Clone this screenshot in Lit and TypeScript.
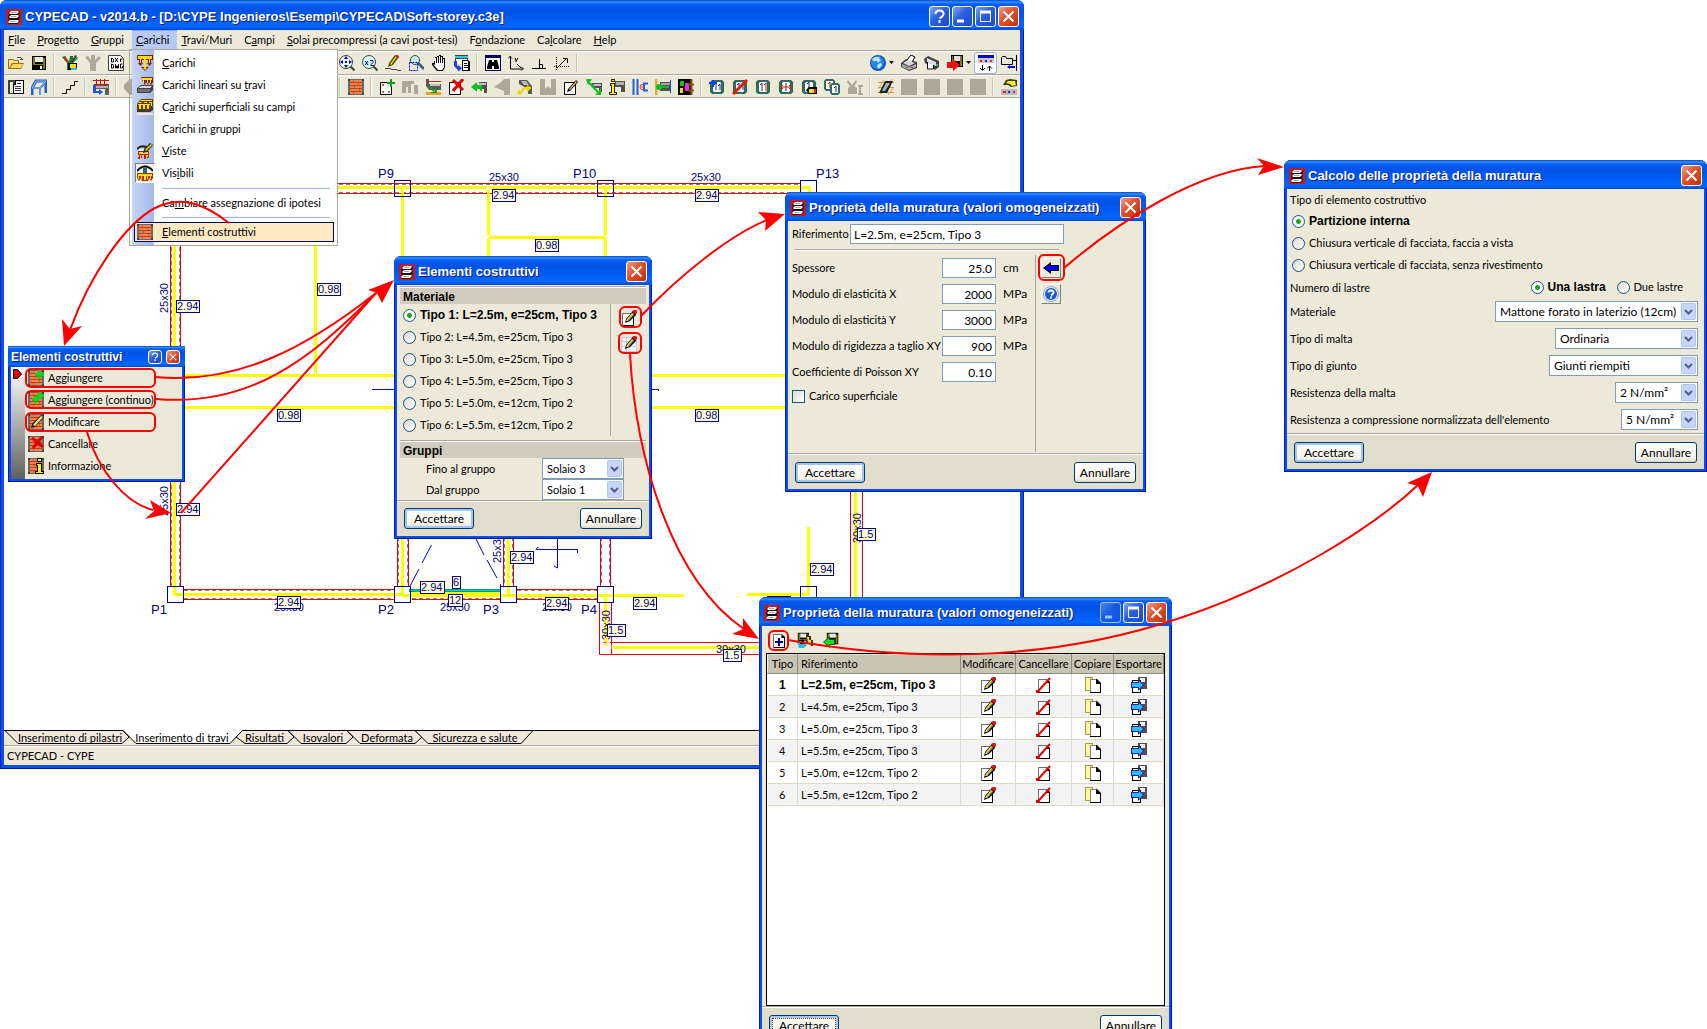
import { LitElement, html, svg, css, nothing } from "lit";
import type { SVGTemplateResult } from "lit";

type Shape = SVGTemplateResult;

const p = (d: string, fill = "#000") => svg`<path d=${d} fill=${fill}></path>`;
const l = (d: string, stroke = "#000", w = 1) =>
  svg`<path d=${d} fill="none" stroke=${stroke} stroke-width=${w}></path>`;

const brick = svg`${p("M0 0h16v16H0z", "#686868")}${p("M2 1h12v14H2z", "#f08050")}
  ${l("M2 3.500h12M2 6.500h12M2 9.500h12M2 12.500h12", "#b04818")}
  ${l("M5.500 1v2M10.500 4v2M6.500 7v2M11.500 10v2M5.500 13v2", "#c86038")}
  ${p("M0 0h2v2H0zM14 0h2v2h-2zM0 14h2v2H0zM14 14h2v2h-2z", "#404040")}`;
const pencil = svg`${p("M4 13l1-4 6-7 4-1v4l-6 6z")}${p("M5 11l1-2 5-6 2 1-6 7z", "#f0e040")}${p("M6 11l6-7 1 1-6 6z", "#909080")}${p("M11 1l2-1h2l1 1v2l-2 2-1-2-2-1z", "#e01010")}`;
const greenPlus = p("M10 0h3v3h3v3h-3v3h-3V6H7V3h3z", "#10d020");
const redX = l("M5 1l10 10M15 1L5 11", "#e00000", 3);
const floppy = svg`${p("M1 1h14v14H1z")}${p("M2 2h2v7H2zM12 3h2v11h-2zM2 9h12v1H2z", "#808000")}${p("M4 2h8v5H4z", "#e8e8e8")}${p("M9 11h2v3H9z", "#fff")}`;
const arrowsDown = svg`${p("M0 0h16v5h-2v3h1l-2.500 3-2.500-3h1V5H9v7h3l-4 4-4-4h3V5H5v3h1l-2.500 3L1 8h1V5H0z", "#802000")}${p("M1 1h14v3h-2v4h-1V4H9v9h1l-2 2-2-2h1V4H4v4H3V4H1z", "#ffe000")}`;
const page = svg`${p("M2 2h9l3 3v11H2z", "#707070")}${p("M11 3l3 2v11H3v-1h10V6h-2z")}${p("M3 3h7v3h3v9H3z", "#fff")}`;
const gray = "#aca899";
const ring = svg`${p("M3 1h10l2 2v10l-2 2H3l-2-2V3z", "#306868")}${p("M5 3h6l1 1v8l-1 1H5l-1-1V4z", "#fffff0")}${p("M0 3h1v10H0zM15 3h1v10h-1z", "#f0e890")}`;
const digits = l("M5 6l2-2v7M9 7l2-2v6", "#2020a0");

const icons: Record<string, Shape> = {
  app: svg`${p("M0 0h16v16H0z", "#c81820")}${p("M4 2h8l2 1-1 3 1 1-1 3 1 2-3 3H3l-1-2 1-3-1-1 1-3-1-1z", "#181010")}
    ${p("M5 2h7l1 1-2 2H4L3 4zM5 6h7l1 1-2 2H4L3 8zM4 11h8l1 1-2 2H3l-1-1z", "#fff")}${p("M5 3h6l-1 1H5zM5 7h6l-1 1H5zM4 12h6l-1 1H4z", "#a8a8a8")}`,
  open: svg`${p("M0 14V4h5l1 1h5v3h5l-3 6z", "#a07010")}${p("M1 5h4l1 1h4v2H4l-3 5z", "#f8e880")}${p("M5 9h10l-2 4H2z", "#ffd860")}${l("M9 2.500h4l1 2M12 4.500h3", "#505050")}`,
  save: floppy,
  tools: svg`${p("M0 2l3-1 4 6 1-6h3v5l4-4 1 1-5 5v7H5V8z", "#108020")}${p("M3 1l4 6-1 1-4-5z", "#e02020")}${p("M13 0l2 1-4 6h-2z", "#404040")}${p("M6 8h9v7H6z")}${p("M8 9h6v4H8z", "#ffe020")}${p("M9 13h6v2H9z", "#20c0e0")}`,
  toolsOff: p("M0 2l3-1 3 4V0h4v5l4-4 2 2-5 5v8H5V8z", gray),
  dxf: svg`${p("M1 1h11v4h3v10H1z", "#fff")}${l("M.5 .5h12l3 3v12H.5z", "#404040")}${l("M3.500 3v4h2V4zM7 3l3 4M10 3L7 7M12.500 7V4h2M3.500 9v4h2v-3zM7.500 9v4h1v-2h1v2h1V9M14.500 9h-2v4h2v-2")}`,
  zoomAll: svg`${l("M10.500 10.500l5 5", "#404040", 2)}<circle cx="7" cy="7" r="6.500" fill="#f4ffff" stroke="#404040"></circle>${p("M7 1l2 3H5zM7 13l2-3H5zM1 7l3-2v4zM13 7l-3-2v4zM6 6h2v2H6z", "#0000e0")}`,
  zoom2: svg`${l("M10.500 10.500l5 5", "#404040", 2)}<circle cx="7" cy="7" r="6.500" fill="#d8ffff" stroke="#404040"></circle>${l("M3 6l3 4M6 6l-3 4M8 5.500h3v2l-2 2v1h3", "#0000a0")}`,
  redraw: svg`${p("M3 12l1-4 6-8 4 2-6 8z", "#505000")}${p("M5 9l6-8 1 1-6 8z", "#f0e000")}${p("M11 0h2l1 2-1 1-3-2z", "#e02020")}${l("M0 13.500h5l2 1h4l2 1h3", "#404040")}`,
  zoomWin: svg`${l("M10 8l6 6", "#406080", 3)}<circle cx="7" cy="5" r="4.500" fill="#c0f8ff" stroke="#404040"></circle><path d="M1.500 7.500h8v8h-8z" fill="none" stroke="#0000ff" stroke-dasharray="2 1"></path>`,
  hand: svg`${p("M3 6h1V2h2V1h2V0h2v1h2v2h2v9l-2 4H6l-5-6V8h2z")}${p("M2 9l2 1V3h1v5h1V2h1v6h1V1h1v7h1V2h1v6h1V4h1v8l-2 3H7z", "#fff")}`,
  regen: svg`${p("M1 0h13v9H1z", "#404040")}${p("M1 1h13v2H1z", "#20d0f0")}${p("M2 4h11v5H2z", "#fff")}${p("M8 5h6l2 2v9H8z")}${p("M9 6h5v9H9z", "#fff")}${l("M10 8.500h3M10 10.500h4M10 12.500h4")}${p("M2 6H0v5l4 4v2l4-4-4-3v2L3 10V6z", "#2040e0")}`,
  find: svg`${p("M0 0h16v16H0z", "#000060")}${p("M1 3h14v12H1z", "#fff")}${p("M4 5h3v2h2V5h3l2 7v2H9v-3H7v3H2v-2z")}`,
  axes: l("M2.500 1v13h13M0 3.500l2-2 2 2M13 11.500l2 2-2 2M7 3l1 2v2M10 3L8 6M9 9l4 4"),
  ortho: l("M1 13.500h14M8.500 4v9M8.500 9.500h3v4"),
  snap: svg`${l("M3 13L13 3M9 3.500h4.500V8")}<path d="M2.500 2v14M0 11.500h16" stroke="#000" stroke-dasharray="1 1"></path>`,
  globe: svg`<circle cx="8" cy="8" r="8" fill="#1058b8"></circle><circle cx="7.500" cy="7.500" r="6.500" fill="#2888e8"></circle>${p("M2 4l3-2 5 0-1 2 2 1-3 3-1-2-4 0zM8 9l3-1 1 2-3 4-2-2z", "#b8e4ff")}`,
  print: svg`${p("M0 8l5-4 11 3v6l-8 3-8-4z", "#404040")}${p("M2 8l5-3 7 3-6 3z", "#d8d8d8")}${p("M1 9l7 3 7-3v3l-7 3-7-3z", "#a8a8a8")}${p("M6 5l4-5 4 2-3 5z", "#fff")}${l("M6 5l4-5 4 2-3 5")}${p("M10 12h2v1h-2z", "#e02020")}${p("M5 12h2v1H5z", "#20a020")}`,
  plot: svg`${p("M0 4l4-3 11 5v6l-4 3L1 8z", "#404040")}${p("M3 3l9 4v4L3 7z", "#e0e0e0")}${p("M3 7l7 3v5H5z", "#fff")}${l("M3.500 7v7h6v-4")}${p("M12 9h2v2h-2z", "#20c060")}`,
  exportRed: svg`<g transform="translate(4)">${p("M0 0h12v12H0z")}${p("M1 1h1v7H1zM9 1h2v10H9z", "#808000")}${p("M3 1h6v5H3z", "#e0e0e0")}</g>${p("M0 7h6V4l7 6-7 6v-3H0z", "#f01010")}`,
  bars: svg`${p("M0 0h16v3H0z", "#0000d0")}${p("M0 3h16v5H0z", "#c8c8c8")}${p("M2 5h2v2H2z", "#e02020")}${p("M7 5h2v2H7z", "#2020e0")}${p("M12 5h2v2h-2z", "#e02080")}${l("M4.500 10v5M2 13l2.500 2.500L7 13M11.500 16v-5M9 13.500l2.500-2.500L14 13.500")}`,
  folder: svg`${l("M.5 9.500v-7l1-1h3l1 2h6v6zM12 5.500h3M15.500 0v16")}${p("M6 12l3-2v1h5v2H9v1z", "#0000f0")}`,
  sheet: svg`${p("M0 1h7v14H0z", "#404040")}${p("M2 3h3v11H2z", "#ece9d8")}${p("M7 1h9v14H5V5h2z")}${p("M8 2h7v12H6V6h2z", "#fff")}${l("M9 4.500h4M7 7.500h6M7 9.500h6M7 11.500h6", "#404040")}`,
  frame: svg`${l("M1 16V9l4-7h10v12", "#2060c0", 3)}${l("M1 9h8l5-5M9 9v7", "#3070d0", 2)}${l("M1 9L5 2h10M1 9h8v7M9 9l6-7", "#90c0f8")}`,
  stairs: l("M0 14.500h4.500v-4h4v-4h4v-4H16", "#000"),
  loads: svg`${p("M2 5h14v11h-4v-6H2z", "#606060")}${p("M3 7h12v2H3z", "#b0b0b0")}${l("M0 1.500h16M3.500 0v5M7.500 0v5M11.500 0v5M1 5.500h14", "#e00000")}${p("M0 6h3v6h3v-2l4 3-4 3v-2H0z", "#2050e0")}`,
  off1: p("M6 0h10v16H6L0 10V6z", gray),
  brick,
  pillarNew: svg`${p("M2 5h10v10H2z", "#fff")}${l("M1.500 3.500h11v12h-11z")}${p("M3 5h2v2H3zM9 12h2v2H9zM3 12h2v2H3z", "#d06040")}${p("M11 0h2v3h3v2h-3v3h-2V5H8V3h3z", "#10a020")}`,
  off2: p("M0 2h12v3H9v9H6V8H4v6H0zM12 6h4v9h-4z", gray),
  beam: svg`${p("M1 0h3v5h12v6H4L1 7z", "#585858")}${l("M4 2.500h12", "#e02020")}${p("M5 5h10v2H5z", "#c0c0c0")}${p("M1 13h15v3H1z", "#f0a020")}${p("M4 7l6 5V9h2v5H6v-1h3L3 8z", "#10a020")}`,
  delete: svg`${p("M2 4h10v11H2z", "#fff")}${l("M1.500 3.500h11v12h-11z")}${l("M5 1l10 10M15 0L5 12", "#e00000", 3)}`,
  beamLeft: svg`${p("M8 3h8v11h-3v-4H8z", "#505050")}${p("M8 4h7v2H8z", "#c0c0c0")}${p("M0 8l6-5v3h5v6H9v-2H6v3z", "#10c020")}`,
  off3: p("M16 0v16h-6v-4L0 8l6-4 4-4z", gray),
  beamYellow: svg`${p("M2 1h8l5 6v8h-4v-5L2 5z", "#585858")}${p("M4 2h5l3 4H7z", "#c0c0c0")}${l("M1 14h3l3-5h6M10 7l3 2-3 3M3 11l-2 3 3 1", "#e8d800", 2)}`,
  off4: p("M0 0h5v10l3-3 3 3V0h5v16H0z", gray),
  editBox: svg`${p("M2 4h10v11H2z", "#fff")}${l("M1.500 3.500h11v12h-11z")}${p("M4 13l1-3 8-9 2 2-8 9z")}${p("M6 10l7-8 1 1-7 8z", "#f0b060")}`,
  diag: svg`${p("M5 4h11v9h-3v-4H8z", "#505050")}${p("M7 5h8v2H8z", "#c0c0c0")}${l("M2 3l11 11", "#10c020", 2)}${p("M0 0h6L4 3 2 6zM15 16h-6l3-3 3-4z", "#10c020")}`,
  info: svg`${p("M6 2h10v11h-4V8H6z", "#505050")}${p("M7 3h8v3H7z", "#b0b0b0")}${p("M1 4h5v9h2v3H0v-3h2V7H1zM2 0h4v3H2z", "#303000")}${p("M2 5h3v9h2v1H1v-1h2V6H2zM3 1h2v1H3z", "#f8e820")}`,
  joint: svg`${l("M1.500 0v16M5.500 0v16", "#2060e0", 2)}${l("M16 4.500h-4v7h4", "#2060e0", 2)}${l("M12 5.500H9l-1 2.500 1 2.500h3M9 8h3", "#f04020")}`,
  anchor: svg`${l("M1 0v16", "#f0a040", 3)}${p("M5 3h11v9H5z", "#505050")}${p("M6 4h9v2H6z", "#a8a8a8")}${l("M2 8h12", "#10c020", 2)}<circle cx="4" cy="8" r="3" fill="#10c020"></circle>${l("M15.500 1v13", "#2040e0")}`,
  tetris: svg`${p("M0 0h13v16H0z")}${p("M2 2h4v5H2z", "#10c020")}${p("M7 4h4v8H7z", "#f020f0")}${p("M2 9h3v5H2z", "#f8d040")}${l("M13.500 0v16M10 5.500h6M10 11.500h6", "#905010", 2)}`,
  r1: svg`${ring}${digits}${p("M0 3h3V1h2v2h3v2H5v3H3V5H0z", "#0040ff")}`,
  r2: svg`${ring}${digits}${l("M1 15L15 1", "#f01010", 3)}`,
  r3: svg`${ring}${l("M5 6l2-2v8", "#2020a0")}${l("M9 6l2-2v8", "#e01010")}`,
  r4: svg`${ring}${l("M8 4v8", "#2020a0")}${l("M3 8h10M5 6L3 8l2 2M11 6l2 2-2 2", "#e01010")}`,
  r5: svg`${ring}${l("M6 5l2-2v7", "#2020a0")}${p("M5 11l3-3h8v7H8z")}${p("M8 10h5v4H8z", "#f0e020")}${p("M13 10h2v4h-2z", "#e02020")}`,
  r6: svg`${p("M2 0h7l2 2v8l-2 2H2l-2-2V2z", "#306868")}${p("M2 2h7v8H2z", "#fffff0")}${l("M4 5l2-2v6", "#e01010")}${p("M8 4h6l2 2v8l-2 2H8l-2-2V6z", "#306868")}${p("M8 6h6v8H8z", "#fffff0")}${l("M10 9l2-2v6", "#2020a0")}`,
  off5: svg`${p("M1 1l4 5 4-5 1 2-3 4 3 2v6H1V9l2-2-3-4z", gray)}${p("M11 6h5v2h-2v6h2v2h-5v-2h1V8h-1z", gray)}`,
  hatch: svg`${l("M0 3.500h16M0 8.500h16M0 13.500h16", "#c89030")}${l("M2 16L14 0M0 10L6 1M10 16l6-8", "#d8b060")}${p("M7 2h8L9 14H1z", "#202020")}${p("M8 4h4l-5 8H4z", "#a0b8b8")}`,
  off6: p("M0 0h16v16H0z", gray),
  custom: svg`${p("M2 6l3-5 4-1 7 1v6l-6 1-3-2z", "#404000")}${p("M5 4l2-2 7 0 1 4-4 1-2-2z", "#f8e840")}${p("M0 10h16v6H0z", "#b8b8b8")}${p("M2 12h3v2H2z", "#e02020")}${p("M7 12h2v2H7z", "#2020e0")}${p("M12 12h2v2h-2z", "#e02080")}`,
  mCarichi: arrowsDown,
  mTravi: svg`${p("M0 11l4-3h12v5l-3 3H0z", "#404040")}${p("M1 11l3-2h11l-2 2z", "#d8d8d8")}${p("M1 12h12v3H1z", "#707070")}${p("M4 0h12v5l-2 3-2-3-1 3-2-3-1 3-2-3z", "#802000")}${p("M5 1h10v2h-1v3h-1V3h-2v3h-1V3H7v3H6V3H5z", "#ffe020")}`,
  mCampi: svg`${p("M0 11l3-3h13v3l-3 2H0z", "#383838")}${p("M0 14h16v2H0z", "#ffe0d0")}${p("M0 5l4-5h12v7l-3 4H0z", "#604000")}${p("M4 1h11v1H3zM1 5h12v1H1zM2 3h3l-1 1H2zM7 3h3v1H7zM12 3h3v1h-3zM2 6h2v4H2zM6 6h2v4H6zM10 6h2v4h-2zM14 4h1v3h-1z", "#ffe020")}`,
  mViste: svg`${l("M0 6q5-5 11-1", "#202020", 2)}${p("M2 6h7v3H2z", "#fff")}${p("M1 8h11v7h-2v-3H9v4H7v-4H5v3H4v-3H3v4H1z", "#c02000")}${p("M2 9h9v2H2zM1 12h1v2H1zM5 12h1v2H5zM10 12h1v2h-1z", "#ffe020")}${p("M6 10l1-4 6-6 3 2-6 7z", "#303000")}${p("M8 7l6-6 1 1-6 6z", "#ffe840")}`,
  mVisibili: svg`${l("M0 6Q8-3 16 6", "#000", 2)}${p("M2 6q6-5 12 0l-3 2H5z", "#fff")}${p("M6 3h4v5H6z", "#107080")}${p("M0 8h16v5l-2 3-2-3-1 3H5l-1-3-2 3-2-3z", "#b03000")}${p("M1 9h14v2h-1v3h-1v-3h-2v3h-1v-3H9v4H7v-4H5v3H4v-3H2v3H1z", "#ffe020")}`,
  bAdd: svg`${brick}${greenPlus}`,
  bAddMore: svg`${brick}${p("M11 0h3v2h2v3h-2v2h-3v2H9v2H6V9H4V6h2V4h3V2h2z", "#10d020")}`,
  bEdit: svg`${brick}${p("M3 14l1-4 9-9 3 2-9 10z", "#202000")}${p("M5 11l8-9 2 1-8 9z", "#f8f080")}`,
  bDel: svg`${brick}${l("M4 2l11 9M14 1L5 12", "#e00000", 3)}`,
  bInfo: svg`${brick}${p("M8 5h6v8h2v3H7v-3h2V8H8zM9 0h5v4H9z")}${p("M9 6h4v8h2v1H8v-1h2V7H9zM10 1h3v2h-3z", "#f8f020")}`,
  edit: svg`${p("M1 3h12v13H1z", "#707070")}${p("M2 15h10V4h1v12H2z")}${p("M2 4h10v11H2z", "#fff")}${pencil}`,
  editTable: svg`${p("M0 1h16v15H0z", "#c8c8d8")}${p("M1 2h4v3H1zM6 2h9v3H6zM1 6h4v4H1zM6 6h9v4H6zM1 11h4v4H1zM6 11h9v4H6z", "#f4f4fa")}${pencil}`,
  cancel: svg`${page}${l("M1 15.500L14 1", "#e80000", 2)}${p("M0 13h3l1 2-1 1H0z", "#e80000")}`,
  copy: svg`${p("M0 0h8v14H0z", "#a0a040")}${p("M1 1h6v12H1z", "#fff8a0")}${p("M5 2h7l4 4v10H5z")}${p("M5 2h6v1H6v12H5z", "#808080")}${p("M6 3h5v4h4v8H6z", "#fff")}`,
  export: svg`${p("M7 0h9v12H7z", "#505050")}${p("M9 1h5v4H9z", "#f0f0f0")}${p("M1 3h9v13H1z")}${p("M2 4h7v11H2z", "#fff")}${p("M0 5h7V2l6 6-6 6v-3H0z", "#2020a0")}${p("M1 6h7V4l4 4-4 4v-2H1z", "#30b8ff")}`,
  addPage: svg`${page}${l("M8 6v8M4 10h8", "#0000a0", 2)}`,
  saveLib: svg`<g transform="scale(.8)">${floppy}</g>${p("M9 2h3v2h2v4h2v6h-2l-1-3h-3z", "#403000")}${p("M10 5h2v3h2v3h-3z", "#f8e040")}${p("M0 9h3v3h4v-2l3 3-3 3H2z", "#20c0e0")}`,
  loadLib: svg`<g transform="translate(3) scale(.82)">${floppy}</g>${p("M0 10l7-6v3h5v6H7v3z", "#105010")}${p("M1 10l5-4v2h5v4H6v2z", "#10e020")}`,
  blueLeft: svg`${p("M0 8l8-6v3h8v6H8v3z")}${p("M1.500 8L7 4v2h8v4H7v2z", "#0000f0")}`,
  help: svg`<circle cx="8" cy="8" r="7.500" fill="#e8f0ff" stroke="#90a8d0"></circle><circle cx="8" cy="8" r="6" fill="#1858d8"></circle>${l("M5.500 6.500q0-2 2.500-2t2.500 2q0 1-2.500 3M8 10.500v2", "#fff", 2)}`,
};

const icon = (name: string) =>
  html`<svg class="ico" width="16" height="16" viewBox="0 0 16 16" aria-hidden="true">${icons[name]}</svg>`;

const base = css`
  * { box-sizing: border-box; }
  button, input, select { font: inherit; color: inherit; margin: 0; }
  button { padding: 0; border: 0; background: none; }
  .ico { display: block; flex: none; }
`;

const capGlyphs: Record<string, Shape> = {
  help: l("M6.500 8q0-3.500 4-3.500t4 3.500q0 2-4 4.500M10.500 14v3", "#fff", 2),
  min: l("M5 15h7", "#fff", 3),
  max: svg`${l("M5.500 5.500h10v10h-10z", "#fff")}${l("M5 6h11", "#fff", 3)}`,
  close: l("M5.500 5.500l10 10M15.500 5.500l-10 10", "#fff", 2),
};
const capLabels: Record<string, string> = { help: "?", min: "Riduci", max: "Ingrandisci", close: "Chiudi" };

class XpWindow extends LitElement {
  static properties = { heading: {}, controls: { type: Array }, kind: { reflect: true } };
  declare heading: string;
  declare controls: string[];
  declare kind: string;
  constructor() {
    super();
    this.heading = "";
    this.controls = ["close"];
    this.kind = "dialog";
  }
  static styles = [base, css`
    :host {
      display: flex; flex-direction: column; padding: 0 3px 3px;
      border-radius: 7px 7px 0 0; color: #000;
      background: #0a50e8; box-shadow: inset 1px 0 #0020c0, inset -1px -1px #0018a8;
    }
    :host([kind="main"]) { padding: 0 4px 4px; }
    :host([kind="main"]) .bar { margin: 0 -4px; height: 30px; padding: 3px 5px 0 6px; }
    :host([kind="palette"]) { border-radius: 0; }
    :host([kind="palette"]) .bar { height: 21px; padding: 1px 5px 0 3px; border-radius: 0; }
    :host([kind="palette"]) .title { font-size: 12px; }
    :host([kind="palette"]) .cap { width: 14px; height: 14px; }
    :host([kind="palette"]) .caps { gap: 4px; }
    .bar {
      display: flex; align-items: center; gap: 3px; margin: 0 -3px; height: 29px; padding: 2px 5px 0;
      border-radius: 7px 7px 0 0;
      background: linear-gradient(#0848c8, #3090ff 7%, #0a5cf0 14%, #0053e4 35%, #005cf4 65%, #0068ff 88%, #0048d0);
    }
    .title {
      flex: 1; margin: 0; font: bold 13px/16px "Liberation Sans", Arial, sans-serif; color: #fff;
      text-shadow: 1px 1px #0a1883; white-space: nowrap;
    }
    .caps { display: flex; gap: 2px; }
    .cap {
      width: 21px; height: 21px; border: 1px solid #fff; border-radius: 3px;
      background: linear-gradient(135deg, #7fa6f5, #2a5fe0 45%, #1c49c8);
    }
    .cap.close { background: linear-gradient(135deg, #f0a088, #e0512c 45%, #c03008); }
    .cap.off { opacity: .6; }
    .cap svg { display: block; width: 100%; height: 100%; }
    .body { flex: 1; display: flex; flex-direction: column; background: #ece9d8; min-height: 0; }
  `];
  render() {
    return html`
      <header class="bar">
        ${this.kind === "palette" ? nothing : icon("app")}
        <h2 class="title">${this.heading}</h2>
        <div class="caps">${this.controls.map((c) => {
          const [name, off] = c.split("-");
          return html`<button class="cap ${name} ${off ?? ""}" aria-label=${capLabels[name]}>
            <svg viewBox="1 1 19 19" aria-hidden="true">${capGlyphs[name]}</svg></button>`;
        })}</div>
      </header>
      <div class="body"><slot></slot></div>`;
  }
}
customElements.define("xp-window", XpWindow);

const SEP = "|";
const fileBar = [["open", "save", SEP, "tools", "toolsOff", "dxf"],
  ["zoomAll", "zoom2", "redraw", "zoomWin", "hand", "regen", SEP, "find", "axes", "ortho", "snap", SEP]];
const fileBarEnd = ["globe+", "print", "plot", "exportRed+", "bars*", "folder"];
const modelBar = [["sheet", "frame", SEP, "stairs", SEP, "loads", SEP, "off1"],
  [SEP, "brick", SEP, "pillarNew", "off2", "beam", "delete", "beamLeft", "off3", "beamYellow", "off4", "editBox", "diag",
    "info", "joint", "anchor", "tetris", SEP, "r1", "r2", "r3", "r4", "r5", "r6", "off5", SEP,
    "hatch", "off6", "off6", "off6", "off6", SEP, "custom"]];

const menus = ["_File", "_Progetto", "_Gruppi", "_Carichi", "_Travi/Muri", "C_ampi",
  "_Solai precompressi (a cavi post-tesi)", "F_ondazione", "Ca_lcolare", "_Help"];
const dropdown: [string, string][] = [
  ["_Carichi", "mCarichi"], ["Carichi lineari su _travi", "mTravi"], ["C_arichi superficiali su campi", "mCampi"],
  ["Carichi in _gruppi", ""], ["_Viste", "mViste"], ["Vis_ibili", "mVisibili"], ["-", ""],
  ["Ca_mbiare assegnazione di ipotesi", ""], ["-", ""], ["_Elementi costruttivi", "brick"]];

const accel = (s: string) => {
  const i = s.indexOf("_");
  return i < 0 ? s : html`${s.slice(0, i)}<u>${s[i + 1]}</u>${s.slice(i + 2)}`;
};

const types = ["L=2.5m, e=25cm, Tipo 3", "L=4.5m, e=25cm, Tipo 3", "L=5.0m, e=25cm, Tipo 3",
  "L=5.5m, e=25cm, Tipo 3", "L=5.0m, e=12cm, Tipo 2", "L=5.5m, e=12cm, Tipo 2"];

const tabs: [string, number][] = [["Inserimento di pilastri", 116], ["Inserimento di travi", 108], ["Risultati", 57],
  ["Isovalori", 60], ["Deformata", 68], ["Sicurezza e salute", 108]];

const tags: [number, number, string, number][] = [
  [492, 189, "2.94", 23], [695, 189, "2.94", 23], [535, 239, "0.98", 23], [317, 283, "0.98", 23],
  [176, 300, "2.94", 23], [176, 503, "2.94", 23], [277, 409, "0.98", 23], [695, 409, "0.98", 23],
  [277, 596, "2.94", 23], [420, 581, "2.94", 24], [452, 576, "6", 8], [448, 594, "12", 14],
  [510, 551, "2.94", 23], [545, 597, "2.94", 23], [633, 597, "2.94", 23], [607, 624, "1.5", 18],
  [723, 649, "1.5", 18], [857, 528, "1.5", 18], [810, 563, "2.94", 23], [767, 596, "2.94", 23]];
const pillars = [[394, 180], [597, 180], [800, 180], [167, 586], [394, 586], [500, 586], [597, 586], [800, 586]];
const pillarNames: [number, number, string][] = [[378, 178, "P9"], [573, 178, "P10"], [816, 178, "P13"],
  [151, 614, "P1"], [378, 614, "P2"], [483, 614, "P3"], [581, 614, "P4"]];
const sections: [number, number, string, boolean][] = [[489, 181, "25x30", false], [691, 181, "25x30", false],
  [274, 611, "25x30", false], [440, 611, "25x30", false], [542, 611, "25x30", false], [716, 653, "30x30", false],
  [168, 313, "25x30", true], [168, 516, "25x30", true], [501, 563, "25x30", true], [610, 640, "30x30", true],
  [861, 543, "30x30", true]];

class AppRoot extends LitElement {
  static styles = [base, css`
    :host { display: block; font: 11px/14px Lato, "Liberation Sans", sans-serif; color: #000; background: #fff; }
    .desk { position: relative; height: 100vh; overflow: hidden; }
    .win { position: absolute; }
    .w-main { left: 0; top: 0; width: 1024px; }
    .w-palette { left: 8px; top: 346px; width: 177px; }
    .w-elements { left: 394px; top: 256px; width: 258px; }
    .w-props { left: 785px; top: 192px; width: 361px; }
    .w-calc { left: 1284px; top: 160px; width: 423px; }
    .w-types { left: 759px; top: 597px; width: 413px; }
    u { text-underline-offset: 1px; }

    .menubar { display: flex; align-items: flex-start; height: 20px; }
    .menubar button { height: 19px; padding: 0 8px 0 4px; white-space: nowrap; }
    .menubar .on { background: #b8caf4; box-shadow: inset 0 1px #8aa4dc; }
    .tools { display: flex; align-items: center; height: 24px; border-top: 1px solid #aca899; box-shadow: inset 0 1px #fff; }
    .tools.last { border-bottom: 1px solid #aca899; padding-top: 2px; }
    .tool { width: 23px; height: 22px; display: flex; align-items: center; justify-content: center; gap: 3px; flex: none; }
    .tool.drop { width: 31px; }
    .tool.on { border: 1px solid #98b0d8; border-radius: 3px; background: #fff; }
    .sep { width: 8px; height: 18px; flex: none; background: linear-gradient(90deg, transparent 3px, #c8c4b0 3px 4px, #fff 4px 5px, transparent 5px); }
    .covered-a { width: 208px; flex: none; }
    .covered-b { width: 193px; flex: none; }
    .grow { flex: 1; }
    .plan { display: block; width: 100%; height: 632px; background: #fff; }
    .plan text { font: 11px "Liberation Sans", Arial, sans-serif; fill: #000080; }
    .plan .pillar { font-size: 13px; }

    .tabs { position: relative; display: flex; height: 15px; padding-left: 8px; }
    .tabs svg { position: absolute; left: 0; top: 0; }
    .tabs button { position: relative; text-align: center; white-space: nowrap; line-height: 15px; }
    .status { margin: 0; height: 20px; border-top: 1px solid #aca899; box-shadow: inset 0 1px #fff; line-height: 19px; padding-left: 3px; }

    .dropdown {
      position: absolute; left: 129px; top: 49px; width: 209px; padding: 2px 3px 3px; background:
      linear-gradient(90deg, transparent 2px, #c6d6f8 2px, #a4b8ea 24px, #fff 24px); border: 1px solid #aca899;
    }
    .dropdown button { display: flex; align-items: center; gap: 7px; width: 100%; height: 22px; padding-left: 2px; white-space: nowrap; text-align: left; }
    .dropdown .slot { width: 20px; height: 20px; display: flex; align-items: center; justify-content: center; }
    .dropdown .checked { background: #f4f1e4; border: 1px solid; border-color: #808080 #fff #fff #808080; }
    .dropdown .hot { height: 20px; background: #ffe9c3; border: 1px solid #000060; padding-left: 0; margin-left: 1px; width: 200px; }
    .dropdown .hot .slot { height: 18px; }
    .dropdown .short { height: 20px; }
    .dropdown hr { height: 1px; margin: 4px 4px 4px 29px; border: 0; background: #9ab4ec; }

    .palette { display: flex; height: 112px; }
    .strip { width: 14px; background: linear-gradient(#fff, #606060); padding: 1px 2px; }
    .palette ul { margin: 0; padding: 0 0 0 3px; list-style: none; }
    .palette li button { display: flex; align-items: center; gap: 4px; height: 22px; white-space: nowrap; }

    hr.line { width: auto; height: 2px; margin: 0; border: 0; background: linear-gradient(#aca899 1px, #fff 1px); }
    hr.short { margin: 0 84px 0 6px; }
    .band { margin: 0; height: 16px; padding-left: 3px; background: #d0cdbe; font: bold 12px/18px "Liberation Sans", Arial, sans-serif; }
    .pad { padding: 1px 3px 0; }
    .split { display: flex; }
    .list { flex: 1; display: flex; flex-direction: column; border-right: 1px solid #aca899; padding-left: 3px; }
    .opt { display: flex; align-items: center; gap: 4px; height: 22px; white-space: nowrap; }
    .opt.strong { font: bold 12px/14px "Liberation Sans", Arial, sans-serif; }
    input[type="radio"], input[type="checkbox"] {
      appearance: none; flex: none; width: 13px; height: 13px; border: 1px solid #1c5180; border-radius: 50%;
      background: linear-gradient(135deg, #dcdcd4, #fff);
    }
    input[type="radio"]:checked { background: radial-gradient(circle, #21a121 2px, transparent 3px), #fff; }
    input[type="checkbox"] { border-radius: 0; }
    .side { width: 35px; display: flex; flex-direction: column; align-items: center; gap: 10px; padding-top: 6px; }
    .gap4 { margin-bottom: 4px; }
    .field { display: flex; align-items: center; height: 21px; padding-left: 26px; }
    .field label { width: 116px; }
    .combo { display: grid; align-items: center; }
    .combo select {
      grid-area: 1 / 1; appearance: none; height: 21px; width: 82px; padding: 0 20px 0 4px; border: 1px solid #7f9db9;
      border-radius: 0; background: #fff;
    }
    .combo svg { grid-area: 1 / 1; justify-self: end; margin-right: 2px; pointer-events: none; }
    .foot { display: flex; justify-content: space-between; height: 34px; padding: 6px 7px 0; background: #e0ddcc; }
    .foot.tall { padding-top: 7px; }
    .push {
      height: 21px; min-width: 62px; border: 1px solid #003c74; border-radius: 3px; font-size: 12px;
      background: linear-gradient(#fff, #f4f2ea 80%, #dcd8cc);
    }
    .push.main { width: 70px; box-shadow: inset 0 0 0 2px #a8c4f0; }
    .push.focus { outline: 1px dotted #804000; outline-offset: -4px; }

    .ref { display: flex; align-items: center; gap: 8px; padding: 3px 5px 5px 4px; }
    .ref label { width: 50px; }
    input[type="text"] { height: 20px; border: 1px solid #7f9db9; background: #fff; padding: 0 3px; font-size: 12px; }
    .ref input { width: 214px; }
    .props { display: flex; flex: 1; padding: 4px 0 1px 4px; }
    .props .rows { width: 244px; display: flex; flex-direction: column; gap: 6px; padding-top: 3px; border-right: 1px solid #aca899; min-height: 197px; }
    .row { display: flex; align-items: center; height: 20px; }
    .row label { width: 150px; white-space: nowrap; }
    .row input[type="text"] { width: 54px; text-align: right; }
    .row span { padding-left: 7px; font-size: 12px; }
    .props .check { height: 16px; gap: 4px; }
    .btns { display: flex; flex-direction: column; gap: 6px; padding: 3px 5px; }
    .sq { width: 20px; height: 20px; display: flex; align-items: center; justify-content: center; border: 1px solid; border-color: #fff #808080 #808080 #fff; }

    .calc { display: flex; flex-direction: column; padding: 0 6px 0 2px; }
    .calc p { margin: 0; line-height: 21px; padding-left: 1px; }
    .calc .opt { padding-left: 3px; }
    .calc .count { display: flex; justify-content: space-between; align-items: center; height: 22px; padding-right: 15px; }
    .calc .count div { display: flex; gap: 8px; }
    .calc .pick { display: flex; justify-content: space-between; align-items: center; height: 27px; padding: 0 0 0 1px; }
    .c203 select { width: 203px; } .c143 select { width: 143px; } .c149 select { width: 149px; }
    .c83 select { width: 83px; } .c77 select { width: 77px; }
    .calc select { font-size: 12px; }

    .iconbar { display: flex; gap: 10px; height: 27px; align-items: center; padding-left: 9px; }
    .grid { margin: 0 4px; height: 353px; border: 1px solid #000; background: #fff; }
    table { width: 100%; border-collapse: collapse; table-layout: fixed; }
    th { height: 19px; padding: 0; font-weight: normal; background: #c8c5b2; border: 1px solid; border-color: #e0decf #8c8a7c #8c8a7c #f8f6ec; white-space: nowrap; }
    th.l, td.l { text-align: left; padding-left: 3px; }
    td { height: 22px; padding: 0; text-align: center; border: 1px solid #dedac8; border-width: 0 1px 1px 0; }
    td button { display: block; margin: 0 auto; }
    tbody tr:nth-child(even) { background: #f3f3f3; }
    tbody tr:first-child { font: bold 12px/14px "Liberation Sans", Arial, sans-serif; }
    .notes { position: absolute; left: 0; top: 0; pointer-events: none; }
  `];

  private toolButton(t: string) {
    if (t === SEP) return html`<span class="sep"></span>`;
    const name = t.replace(/[+*]/, "");
    const drop = t.endsWith("+");
    return html`<button class="tool ${drop ? "drop" : ""} ${t.endsWith("*") ? "on" : ""}" aria-label=${name}>
      ${icon(name)}${drop ? html`<svg width="5" height="3" viewBox="0 0 5 3" aria-hidden="true">${p("M0 0h5L2.500 3z")}</svg>` : nothing}</button>`;
  }

  private combo(id: string, value: string) {
    return html`<select id=${id}><option>${value}</option></select>
      <svg width="15" height="17" viewBox="0 0 15 17" aria-hidden="true">
        <rect x=".5" y=".5" width="14" height="16" rx="1" fill="#c6d5fb" stroke="#b0c4f4"></rect>
        ${l("M4 7l3.500 3.500L11 7", "#4d6185", 2)}</svg>`;
  }

  private footer(cls = "", focus = "") {
    return html`<hr class="line"><div class="foot ${cls}">
      <button class="push main ${focus}">Accettare</button><button class="push">Annullare</button></div>`;
  }

  private plan() {
    const wall = (d: string) => svg`<path d=${d} stroke="#e80000" fill="none"></path>`;
    const dash = (d: string) => svg`<path d=${d} stroke="#808080" stroke-dasharray="4 3" fill="none"></path>`;
    const load = (d: string, w = 3) => svg`<path d=${d} stroke="#ffff00" stroke-width=${w} fill="none"></path>`;
    const blue = (d: string) => svg`<path d=${d} stroke="#0000e0" fill="none"></path>`;
    return html`<svg class="plan" viewBox="4 98 1016 632" preserveAspectRatio="xMinYMin slice" role="img" aria-label="Pianta">
      ${pillars.map(([x, y]) => svg`<rect x=${x} y=${y} width="17" height="17" fill="#fff"></rect>`)}
      ${wall("M178 183.500H800M178 193.500H800M170.500 240V586M180.500 240V586M184 589.500H394M184 599.500H394M412 589.500H500M412 599.500H500M517 589.500H597M517 599.500H597M397.500 530V586M408.500 530V586M503.500 530V586M513.500 530V586M600.500 530V586M610.500 530V586M599.500 603V654.500H765M611.500 603V654M610 642.500H765M850.500 480V600M862.500 480V600")}
      ${dash("M178 184.500H800M178 192.500H800M171.500 240V586M179.500 240V586M184 590.500H394M184 598.500H394M412 598.500H500M517 590.500H597M517 598.500H597M398.500 530V586M407.500 530V586M504.500 530V586M512.500 530V586M601.500 530V586M609.500 530V586")}
      ${load("M178 187.500H809.500V195M402.500 188V260M488.500 189V260M605.500 188V260M488 237.500H605M315.500 240V374M176 375.500H809M176 407.500H809M174.500 240V594.500H402.500V530M508.500 530V594M402 595.500H684M605.500 598V645M611 647.500H765M855.500 480V600M747 594.500H808.500V527")}
      ${load("M410 594H501", 5)}
      ${l("M409 590.500H501", "#00a060", 3)}${l("M409 590.500H501", "#00c8f0")}
      ${l("M488 187v3M487 237h2M605 237h2M315 374h1M605 645v3", "#fff", 3)}
      ${l("M603 642.500h4M611.500 645v4", "#ff40ff")}
      ${blue("M372 389.500H400M645 389.500H658.500V391M431.500 545L422 563M419 569L410 586M476 539L484 555M487 560L497 578M500.500 584V589M557.500 530V568L554 566M538 547L536 549.500H577.500V553")}
      ${sections.map(([x, y, t, v]) => svg`<text x=${x} y=${y} transform=${v ? `rotate(-90 ${x} ${y})` : ""}>${t}</text>`)}
      ${pillars.map(([x, y]) => svg`<rect x=${x + 0.5} y=${y + 0.5} width="16" height="16" fill="none" stroke="#000080"></rect>`)}
      ${tags.map(([x, y, t, w]) => svg`<rect x=${x + 0.5} y=${y + 0.5} width=${w} height="12" fill="#ffffe0" stroke="#000080"></rect>
        <text x=${x + 1} y=${y + 10}>${t}</text>`)}
      ${pillarNames.map(([x, y, t]) => svg`<text class="pillar" x=${x} y=${y}>${t}</text>`)}
    </svg>`;
  }

  private mainWindow() {
    return html`<xp-window class="win w-main" kind="main" heading="CYPECAD - v2014.b - [D:\\CYPE Ingenieros\\Esempi\\CYPECAD\\Soft-storey.c3e]"
        .controls=${["help", "min", "max", "close"]}>
      <nav class="menubar">${menus.map((m, i) => html`<button class=${i === 3 ? "on" : ""}>${accel(m)}</button>`)}</nav>
      <div class="tools">${fileBar[0].map(this.toolButton)}<span class="covered-a"></span>${fileBar[1].map(this.toolButton)}
        <span class="grow"></span>${fileBarEnd.map(this.toolButton)}</div>
      <div class="tools last">${modelBar[0].map(this.toolButton)}<span class="covered-b"></span>${modelBar[1].map(this.toolButton)}</div>
      ${this.plan()}
      <div class="tabs">
        <svg width="1016" height="15" viewBox="4 730 1016 15" aria-hidden="true">
          ${p("M4 730H1020V745H4z", "#ece9d8")}
          <g fill="#efe7dc" stroke="#000">
            <path d="M5 730.500L18 743.500H122L129 737L123 730.500z"></path>
            <path d="M242 730.500L236 737L245 743.500H287L294 737L288 730.500z"></path>
            <path d="M288 730.500L301 743.500H346L353 737L347 730.500z"></path>
            <path d="M347 730.500L360 743.500H415L422 737L415 730.500z"></path>
            <path d="M415 730.500L428 743.500H521L533 730.500z"></path>
          </g>
          ${p("M123.500 730L136 743H230L243 730z", "#fff")}
          ${l("M4 730.500H123L136 743.500H230L242.500 730.500H1020")}
        </svg>
        ${tabs.map(([t, w]) => html`<button style="width:${w}px">${t}</button>`)}
      </div>
      <p class="status">CYPECAD - CYPE</p>
    </xp-window>`;
  }

  private menuPanel() {
    return html`<div class="dropdown">${dropdown.map(([t, i]) => t === "-" ? html`<hr>` : html`
      <button class="${t.includes("Elementi") ? "hot" : t.includes("ipotesi") ? "short" : ""}">
        <span class="slot ${i === "mVisibili" ? "checked" : ""}">${i ? icon(i) : nothing}</span><span>${accel(t)}</span></button>`)}</div>`;
  }

  private palette() {
    const items = [["bAdd", "Aggiungere"], ["bAddMore", "Aggiungere (continuo)"], ["bEdit", "Modificare"],
      ["bDel", "Cancellare"], ["bInfo", "Informazione"]];
    return html`<xp-window class="win w-palette" kind="palette" heading="Elementi costruttivi" .controls=${["help", "close"]}>
      <div class="palette">
        <div class="strip"><svg width="9" height="12" viewBox="0 0 9 12" aria-hidden="true"><path d="M.5 1.500h4l4 4.500-4 4.500h-4z" fill="#e00000" stroke="#000"></path></svg></div>
        <ul>${items.map(([i, t]) => html`<li><button>${icon(i)}${t}</button></li>`)}</ul>
      </div></xp-window>`;
  }

  private elements() {
    return html`<xp-window class="win w-elements" heading="Elementi costruttivi">
      <div class="pad">
        <hr class="line"><h3 class="band">Materiale</h3>
        <div class="split gap4">
          <div class="list">${types.map((t, i) => html`<label class="opt ${i ? "" : "strong"}">
            <input type="radio" name="type" ?checked=${i === 0}>Tipo ${i + 1}: ${t}</label>`)}</div>
          <div class="side"><button aria-label="Modificare">${icon("edit")}</button><button aria-label="Elenco">${icon("editTable")}</button></div>
        </div>
        <hr class="line"><h3 class="band">Gruppi</h3>
        <div class="field"><label for="to">Fino al gruppo</label><span class="combo">${this.combo("to", "Solaio 3")}</span></div>
        <div class="field"><label for="from">Dal gruppo</label><span class="combo">${this.combo("from", "Solaio 1")}</span></div>
      </div>
      ${this.footer()}</xp-window>`;
  }

  private props() {
    const rows = [["Spessore", "25.0", "cm"], ["Modulo di elasticità X", "2000", "MPa"], ["Modulo di elasticità Y", "3000", "MPa"],
      ["Modulo di rigidezza a taglio XY", "900", "MPa"], ["Coefficiente di Poisson XY", "0.10", ""]];
    return html`<xp-window class="win w-props" heading="Proprietà della muratura (valori omogeneizzati)">
      <div class="ref"><label for="ref">Riferimento</label><input id="ref" type="text" value="L=2.5m, e=25cm, Tipo 3"></div>
      <hr class="line short">
      <div class="props">
        <div class="rows">${rows.map(([n, v, u], i) => html`<div class="row"><label for="v${i}">${n}</label>
            <input id="v${i}" type="text" value=${v}><span>${u}</span></div>`)}
          <label class="row check"><input type="checkbox">Carico superficiale</label></div>
        <div class="btns"><button class="sq" aria-label="Calcolo">${icon("blueLeft")}</button><button class="sq" aria-label="Aiuto">${icon("help")}</button></div>
      </div>
      ${this.footer("tall")}</xp-window>`;
  }

  private calc() {
    const kinds = ["Partizione interna", "Chiusura verticale di facciata, faccia a vista", "Chiusura verticale di facciata, senza rivestimento"];
    const picks = [["Materiale", "Mattone forato in laterizio (12cm)", "c203"], ["Tipo di malta", "Ordinaria", "c143"],
      ["Tipo di giunto", "Giunti riempiti", "c149"], ["Resistenza della malta", "2 N/mm²", "c83"],
      ["Resistenza a compressione normalizzata dell'elemento", "5 N/mm²", "c77"]];
    return html`<xp-window class="win w-calc" heading="Calcolo delle proprietà della muratura">
      <div class="calc">
        <p>Tipo di elemento costruttivo</p>
        ${kinds.map((k, i) => html`<label class="opt ${i ? "" : "strong"}"><input type="radio" name="kind" ?checked=${i === 0}>${k}</label>`)}
        <div class="count"><p>Numero di lastre</p><div>
          <label class="opt strong"><input type="radio" name="leaf" checked>Una lastra</label>
          <label class="opt"><input type="radio" name="leaf">Due lastre</label></div></div>
        ${picks.map(([n, v, c], i) => html`<div class="pick"><label for="p${i}">${n}</label><span class="combo ${c}">${this.combo("p" + i, v)}</span></div>`)}
      </div>
      ${this.footer("tall")}</xp-window>`;
  }

  private typesWindow() {
    const act: [string, string][] = [["edit", "Modificare"], ["cancel", "Cancellare"], ["copy", "Copiare"], ["export", "Esportare"]];
    return html`<xp-window class="win w-types" heading="Proprietà della muratura (valori omogeneizzati)" .controls=${["min-off", "max", "close"]}>
      <div class="iconbar">${["addPage", "saveLib", "loadLib"].map((n) => html`<button aria-label=${n}>${icon(n)}</button>`)}</div>
      <div class="grid"><table>
        <colgroup><col style="width:30px"><col style="width:163px"><col style="width:55px"><col style="width:56px"><col style="width:42px"><col></colgroup>
        <thead><tr><th>Tipo</th><th class="l">Riferimento</th>${act.map(([, t]) => html`<th>${t}</th>`)}</tr></thead>
        <tbody>${types.map((t, i) => html`<tr><td>${i + 1}</td><td class="l">${t}</td>
          ${act.map(([n, a]) => html`<td><button aria-label=${a}>${icon(n)}</button></td>`)}</tr>`)}</tbody>
      </table></div>
      ${this.footer("tall", "focus")}</xp-window>`;
  }

  private notes() {
    const boxes = [[26, 369, 129, 18], [26, 391, 129, 17], [26, 413, 129, 18], [620, 307, 21, 20], [619, 333, 22, 20], [1039, 255, 25, 25], [769, 631, 19, 19]];
    const curves = ["M229 223C200 200 178 197 155 208C125 224 90 275 70 330", "M155 377C240 385 310 345 376 293",
      "M156 399C250 407 310 360 376 293", "M181 513L376 293", "M87 432C98 470 125 503 153 510",
      "M641 316C680 275 730 235 767 220", "M630 354C636 460 672 580 744 629", "M1064 268C1120 220 1200 170 1264 166",
      "M788 640C900 660 1040 665 1180 618C1280 585 1370 530 1418 485"];
    const heads = ["64,346 62,319 70,329 82,326", "394,280 368,290 377,293 382,303", "171,513 150,500 154,511 145,519",
      "785,214 758,212 766,220 765,231", "759,639 732,634 743,629 743,618", "1284,167 1257,158 1264,166 1258,175",
      "1432,472 1407,483 1418,486 1423,497"];
    return html`<svg class="notes" width="1707" height="1029" viewBox="0 0 1707 1029" aria-hidden="true">
      <g fill="none" stroke="#ff0000" stroke-width="2">
        ${boxes.map(([x, y, w, h]) => svg`<rect x=${x} y=${y} width=${w} height=${h} rx="5"></rect>`)}
        ${curves.map((d) => svg`<path d=${d}></path>`)}
      </g>
      ${heads.map((h) => svg`<polygon points=${h} fill="#ff0000"></polygon>`)}
    </svg>`;
  }

  render() {
    return html`<main class="desk">${this.mainWindow()}${this.menuPanel()}${this.palette()}${this.elements()}
      ${this.props()}${this.calc()}${this.typesWindow()}${this.notes()}</main>`;
  }
}
customElements.define("app-root", AppRoot);
